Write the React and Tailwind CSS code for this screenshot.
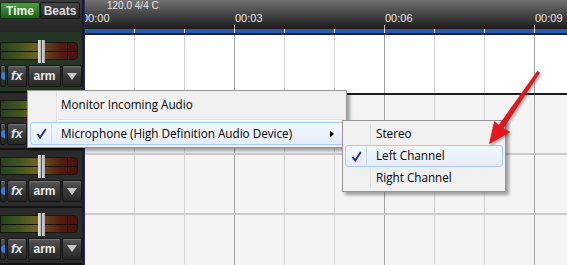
import React from 'react';

const gridCells = Array.from({ length: 10 }, (_, i) => i);

// little white/grey slider thumb over the level meter
const MeterSlider = () => (
  <div className="relative w-[78px] h-[18px] rounded-r-[4px] border border-[#17170f] bg-[linear-gradient(to_right,#25431e,#44561f_25%,#6a6421_45%,#623c19_62%,#541b13_80%,#4a0f0f)]">
    <div className="absolute left-0 right-0 top-[8px] h-px bg-[#141008]" />
    <div className="absolute top-0 bottom-0 left-[66px] w-px bg-[#1a0707]" />
    <div className="absolute -top-[3px] -bottom-[4px] left-[37px] flex">
      <div className="w-[3px] bg-gradient-to-r from-[#e6e6e6] to-[#b8b8b8]" />
      <div className="w-px bg-[#4a4a4a]" />
      <div className="w-[3px] bg-gradient-to-r from-[#d8d8d8] to-[#a8a8a8]" />
    </div>
  </div>
);

const PanelButton = ({ className = '', children }) => (
  <div
    className={`h-full flex items-center justify-center rounded-[2px] border border-[#161616] bg-gradient-to-b from-[#575757] via-[#3a3a3a] to-[#262626] shadow-[inset_0_1px_0_rgba(255,255,255,0.18)] ${className}`}
  >
    {children}
  </div>
);

const TrackControls = ({ first }) => (
  <div
    className={
      first
        ? 'h-[63px] pt-[10px] bg-[#263626] border-b-2 border-[#121212] flex flex-col'
        : 'h-[60px] pt-[7px] bg-[#2b2b2b] border-b-2 border-[#121212] flex flex-col'
    }
  >
    <MeterSlider />
    <div className="mt-[5px] h-[22px] flex gap-[1px]">
      <PanelButton className="w-[6px] overflow-hidden justify-end">
        <div className="w-[8px] h-[8px] shrink-0 -mr-[4px] rounded-full bg-[#2f7fe0]" />
      </PanelButton>
      <PanelButton className="w-[20px]">
        <span className="text-[13px] font-bold italic text-[#dce4ee]">fx</span>
      </PanelButton>
      <PanelButton className="w-[34px]">
        <span className="text-[12px] font-bold text-[#ececec]">arm</span>
      </PanelButton>
      <PanelButton className="w-[20px]">
        <svg width="10" height="7" viewBox="0 0 10 7">
          <polygon points="0,0 10,0 5,7" fill="#c8c8c8" />
        </svg>
      </PanelButton>
    </div>
  </div>
);

const TrackLane = ({ first }) => (
  <div
    className={
      first
        ? 'h-[60px] shrink-0 flex bg-white border-b-2 border-[#1c1c1c]'
        : 'h-[60px] shrink-0 flex bg-[#f4f4f4] border-b-2 border-[#c9c9c9]'
    }
  >
    {gridCells.map((i) => (
      <div
        key={i}
        className={
          i % 3 === 2
            ? 'w-[50px] shrink-0 h-full border-r border-[#a2a2a2]'
            : 'w-[50px] shrink-0 h-full border-r border-[#d4d4d4]'
        }
      />
    ))}
  </div>
);

const CheckMark = () => (
  <svg width="11" height="11" viewBox="0 0 11 11">
    <path d="M1.5 6 L4.2 9.5 L9.8 1" fill="none" stroke="#1d2c86" strokeWidth="1.9" strokeLinejoin="miter" />
  </svg>
);

const MenuItem = ({ label, checked, highlighted, submenu, height }) =>
  highlighted ? (
    <div
      className={`${height} relative flex items-center rounded-[3px] border border-[#a9cbf2] bg-gradient-to-b from-[#f3f7fd] to-[#e4edf9]`}
    >
      <div className="w-[21px] h-full flex items-center justify-center rounded-[2px] border-r border-[#c8dcf4]">
        {checked && <CheckMark />}
      </div>
      <span className="ml-[9px]">{label}</span>
      {submenu && (
        <svg className="absolute right-[9px] top-1/2 -translate-y-1/2" width="4" height="7" viewBox="0 0 4 7">
          <polygon points="0,0 4,3.5 0,7" fill="#000" />
        </svg>
      )}
    </div>
  ) : (
    <div className={`${height} flex items-center pl-[31px]`}>{label}</div>
  );

const App = () => (
  <div className="relative w-[567px] h-[265px] overflow-hidden flex font-['Liberation_Sans',Arial,sans-serif]">
    {/* track control panel */}
    <div className="w-[82px] shrink-0 flex flex-col bg-[#2b2b2b]">
      <div className="h-[32px] shrink-0 bg-gradient-to-b from-[#3b3b3b] to-[#242424]">
        <div className="mt-[2px] h-[17px] flex">
          <div className="w-[40px] flex items-center justify-center rounded-[2px] border border-[#173317] bg-gradient-to-b from-[#4f9c3c] to-[#1d5e1b] text-[12px] font-bold text-[#eaf6e4]">
            Time
          </div>
          <div className="w-[40px] flex items-center justify-center rounded-[2px] border border-[#161616] bg-gradient-to-b from-[#464646] to-[#252525] text-[12px] font-bold text-[#dedede]">
            Beats
          </div>
        </div>
      </div>
      <TrackControls first />
      <TrackControls />
      <TrackControls />
      <TrackControls />
    </div>
    <div className="w-[3px] shrink-0 bg-[#1d1d1d] border-r border-[#25296a]" />

    {/* timeline */}
    <div className="flex-1 flex flex-col overflow-hidden">
      <div className="h-[29px] shrink-0 flex flex-col bg-gradient-to-b from-[#727272] to-[#1c1c1c] text-[#e6e6e6]">
        <div className="h-[13px] pl-[22px] text-[10px] leading-[12px]">120.0 4/4 C</div>
        <div className="flex-1 flex">
          <div className="w-[149px] shrink-0 flex flex-col">
            <span className="-ml-[3px] text-[11px] leading-[13px]">00:00</span>
          </div>
          {['00:03', '00:06', '00:09'].map((t) => (
            <div key={t} className="w-[150px] shrink-0 flex flex-col">
              <span className="pl-px text-[11px] leading-[13px]">{t}</span>
              <div className="mt-auto h-[4px] border-l border-[#b8b8b8]" />
            </div>
          ))}
        </div>
      </div>
      <div className="h-[4px] shrink-0 flex -ml-px bg-[#2a5cac]">
        {gridCells.map((i) => (
          <div key={i} className="w-[50px] shrink-0 h-full border-l border-[#d8e2f2]" />
        ))}
      </div>
      <div className="h-[2px] shrink-0 bg-[#16223c]" />
      <TrackLane first />
      <TrackLane />
      <TrackLane />
      <TrackLane />
    </div>

    {/* context menu */}
    <div className="absolute left-[27px] top-[90px] w-[320px] p-[2px] border border-[#979797] bg-[#f0f0f0] shadow-[3px_3px_3px_rgba(0,0,0,0.35)] font-['Open_Sans',sans-serif] text-[11.7px] text-black">
      <div className="absolute left-[28px] top-[2px] bottom-[2px] w-[2px] border-l border-[#e0e1e1] bg-white/70" />
      <MenuItem label="Monitor Incoming Audio" height="h-[24px]" />
      <div className="h-[5px] ml-[28px] flex flex-col justify-center">
        <div className="h-px bg-[#e0e0e0]" />
        <div className="h-px bg-white" />
      </div>
      <MenuItem label="Microphone (High Definition Audio Device)" checked highlighted submenu height="h-[23px]" />
    </div>

    {/* submenu */}
    <div className="absolute left-[342px] top-[120px] w-[164px] p-[2px] border border-[#979797] bg-[#f0f0f0] shadow-[3px_3px_3px_rgba(0,0,0,0.35)] font-['Open_Sans',sans-serif] text-[11.7px] text-black">
      <div className="absolute left-[27px] top-[2px] bottom-[2px] w-[2px] border-l border-[#e0e1e1] bg-white/70" />
      <MenuItem label="Stereo" height="h-[22px]" />
      <MenuItem label="Left Channel" checked highlighted height="h-[22px]" />
      <MenuItem label="Right Channel" height="h-[22px]" />
    </div>

    {/* red annotation arrow */}
    <svg
      className="absolute left-[480px] top-[62px] drop-shadow-[1px_2px_1.5px_rgba(0,0,0,0.35)]"
      width="70"
      height="90"
      viewBox="0 0 70 90"
    >
      <polygon
        points="57.4,9.2 59.6,10.8 23.1,66.2 29.5,70 9.5,81.5 14.5,59.5 18.9,63.3"
        fill="#e8151a"
        stroke="#c40a0f"
        strokeWidth="0.6"
        strokeLinejoin="round"
      />
    </svg>
  </div>
);

export default App;
